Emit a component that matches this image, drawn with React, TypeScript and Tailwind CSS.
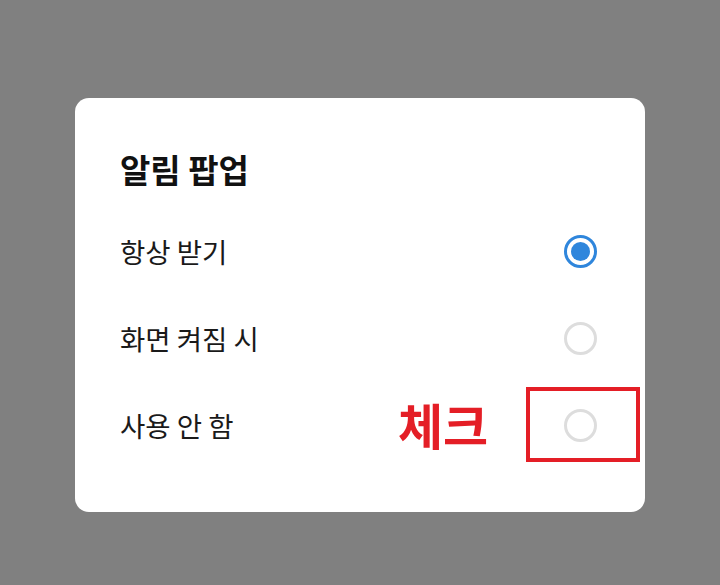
import React from "react";

const options = [
  { label: "항상 받기", checked: true },
  { label: "화면 켜짐 시", checked: false },
  { label: "사용 안 함", checked: false },
];

function Radio({ checked }: { checked: boolean }) {
  return checked ? (
    <div className="w-[33px] h-[33px] rounded-full border-[3px] border-[#2f86dc] flex items-center justify-center">
      <div className="w-[19px] h-[19px] rounded-full bg-[#2f86dc]" />
    </div>
  ) : (
    <div className="w-[33px] h-[33px] rounded-full border-[3px] border-[#dddddd]" />
  );
}

export default function App() {
  return (
    <div
      className="w-[720px] h-[585px] bg-[#808080] pt-[98px] pl-[75px]"
      style={{ fontFamily: '"Noto Sans CJK KR", "Noto Sans", sans-serif' }}
    >
      <div className="w-[570px] h-[414px] bg-white rounded-[14px] pt-[47px] pl-[45px] pr-[48px]">
        <div className="text-[33px] font-bold text-[#111] leading-[48px]">알림 팝업</div>
        <div className="mt-[42px] flex flex-col gap-[54px]">
          {options.map((o, i) => (
            <div key={i} className="relative flex items-center justify-between h-[33px]">
              <span className="text-[27.5px] text-[#1a1a1a] leading-[33px]">{o.label}</span>
              <Radio checked={o.checked} />
              {i === 2 && (
                <>
                  <span className="absolute left-[278px] top-[-17px] text-[49px] font-bold text-[#e41e26] leading-[64px]">
                    체크
                  </span>
                  <div className="absolute right-[-43px] top-[-22px] w-[114px] h-[75px] border-[4px] border-[#e41e26]" />
                </>
              )}
            </div>
          ))}
        </div>
      </div>
    </div>
  );
}
